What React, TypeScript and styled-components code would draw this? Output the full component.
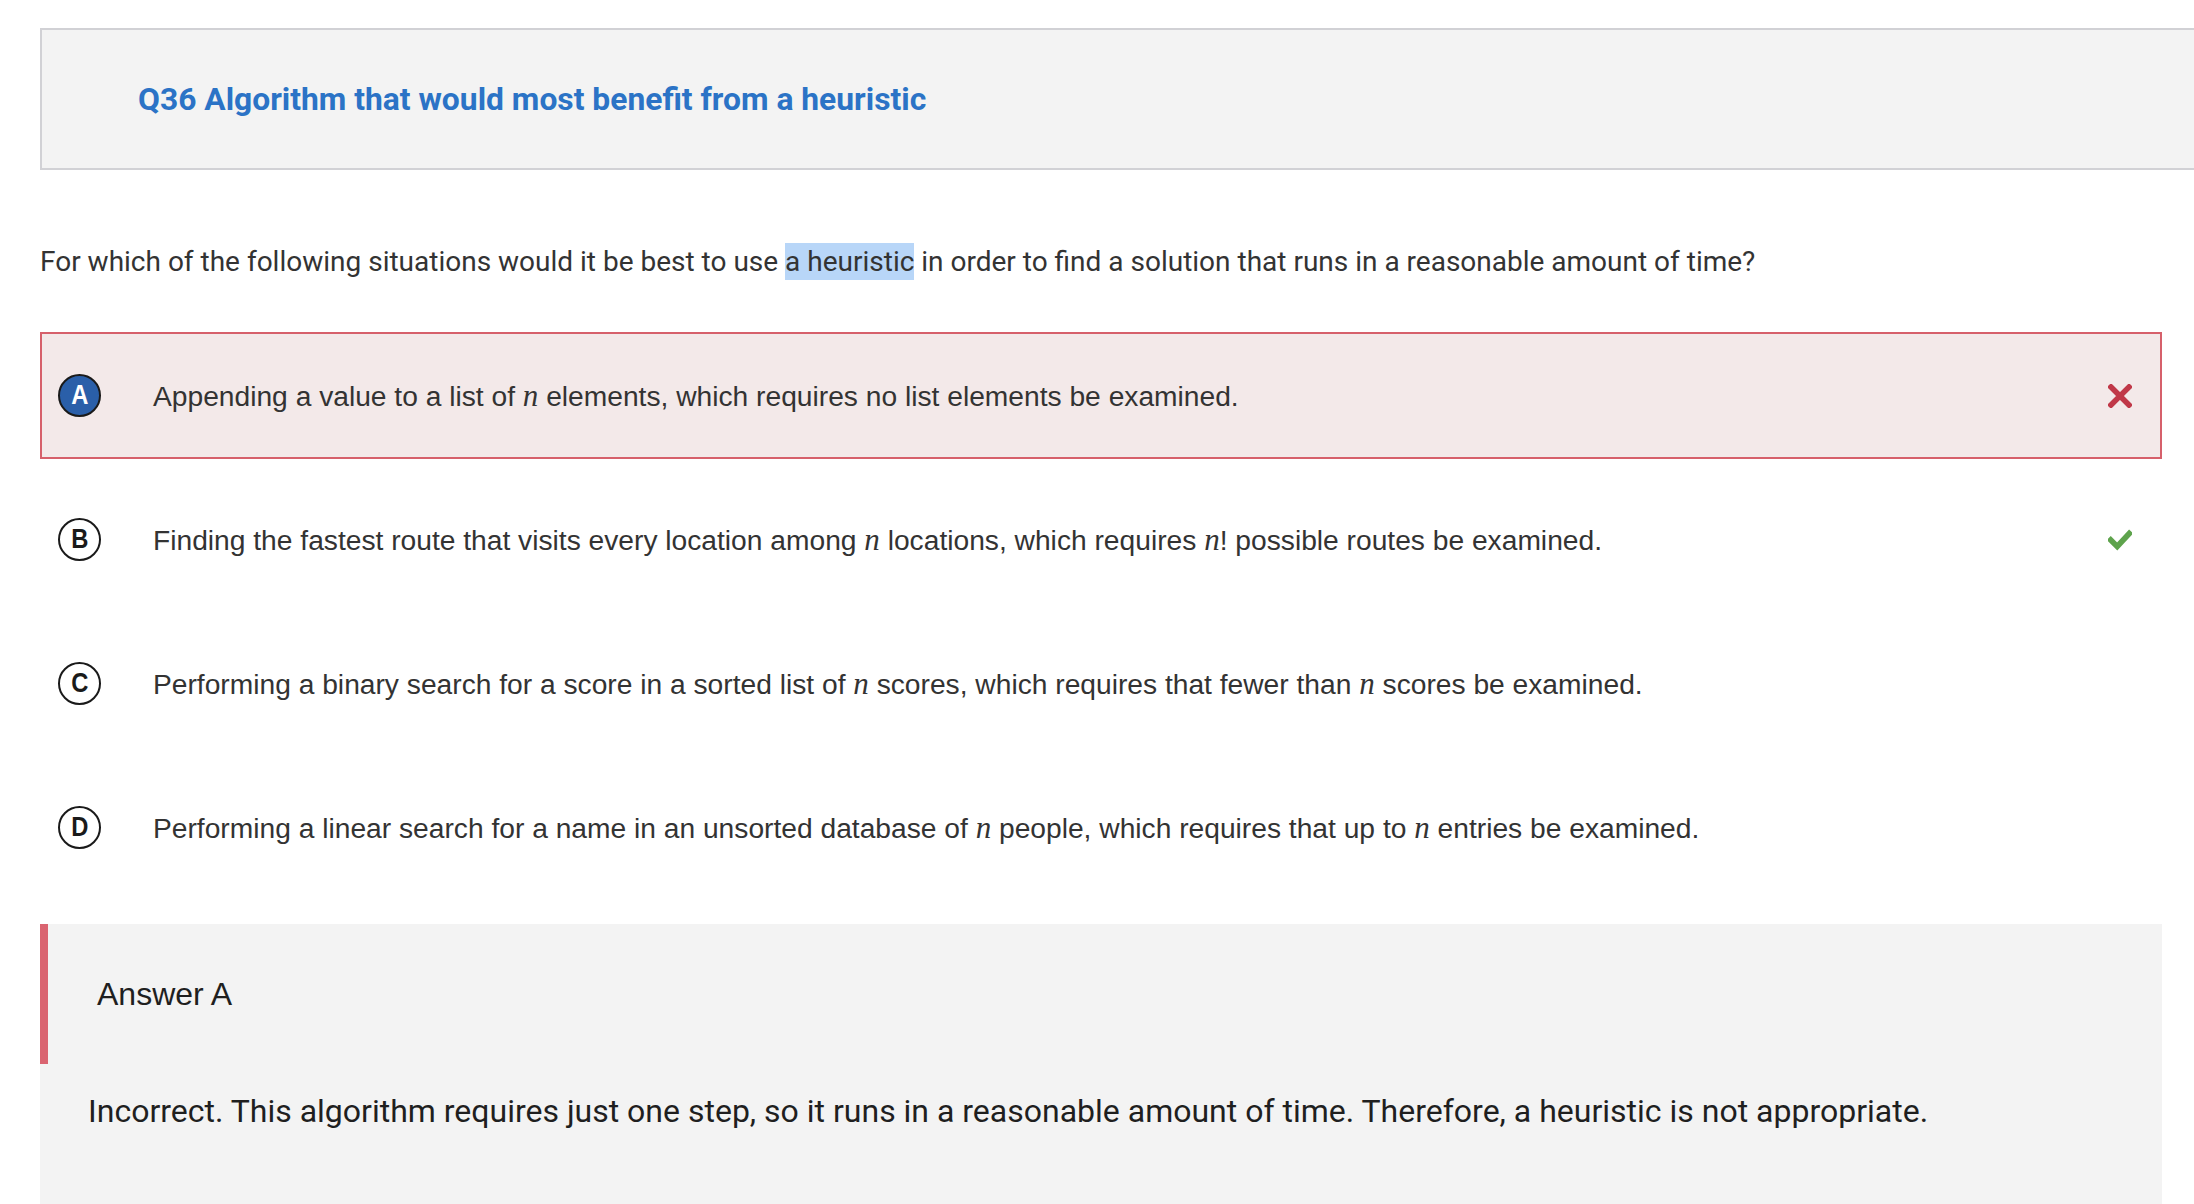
import React from "react";
import styled, { createGlobalStyle } from "styled-components";

const Global = createGlobalStyle`
  html, body { margin: 0; padding: 0; background: #ffffff; }
  body { font-family: Roboto, "Liberation Sans", sans-serif; }
  * { box-sizing: border-box; }
`;

const Page = styled.div`
  padding: 28px 32px 0 40px;
  overflow: hidden;
  height: 1204px;
`;

const Header = styled.div`
  margin-right: -32px;
  height: 142px;
  background: #f3f3f3;
  border: 2px solid #d1d1d5;
  border-right: none;
  padding-left: 96px;
  display: flex;
  align-items: center;
`;

const Title = styled.h1`
  margin: 0;
  font-family: Roboto, sans-serif;
  font-weight: 700;
  font-size: 31.8px;
  color: #2b73c6;
`;

const Question = styled.p`
  margin: 73px 0 0 0;
  font-family: Roboto, sans-serif;
  font-size: 28px;
  line-height: 37px;
  color: #333333;
`;

const Highlight = styled.span`
  display: inline-block;
  background: #b8d6f8;
  line-height: 37px;
`;

const OptionList = styled.div`
  margin-top: 52px;
  display: flex;
  flex-direction: column;
  gap: 17px;
`;

const Option = styled.div<{ $wrong?: boolean }>`
  height: 127px;
  display: flex;
  align-items: center;
  padding: 0 28px 0 16px;
  border: 2px solid ${(p) => (p.$wrong ? "#d6606b" : "transparent")};
  background: ${(p) => (p.$wrong ? "#f3e9e9" : "transparent")};
`;

const Bubble = styled.div<{ $filled?: boolean }>`
  flex: none;
  width: 43px;
  height: 43px;
  border-radius: 50%;
  border: 2px solid #1a1a1a;
  background: ${(p) => (p.$filled ? "#2a5fa9" : "#ffffff")};
  color: ${(p) => (p.$filled ? "#ffffff" : "#1a1a1a")};
  font-family: "Liberation Sans", Arial, sans-serif;
  font-weight: 700;
  font-size: 27px;
  line-height: 1;
  display: flex;
  align-items: center;
  justify-content: center;
`;

const BubbleLetter = styled.span`
  display: inline-block;
  transform: scaleX(0.88);
`;

const OptionText = styled.div`
  flex: 1;
  margin-left: 52px;
  font-family: "Liberation Sans", Arial, sans-serif;
  font-size: 28.2px;
  color: #333333;
`;

const MathVar = styled.span`
  font-family: "Liberation Serif", "Times New Roman", serif;
  font-style: italic;
  font-size: 1.1em;
`;

const Mark = styled.div`
  flex: none;
  width: 24px;
  height: 24px;
  display: flex;
  align-items: center;
  justify-content: center;
`;

const Explanation = styled.div`
  margin-top: 33px;
  background: #f3f3f3;
  padding-bottom: 120px;
`;

const AnswerHead = styled.div`
  height: 140px;
  border-left: 8px solid #da6470;
  padding-left: 49px;
  display: flex;
  align-items: center;
  font-family: "Liberation Sans", Arial, sans-serif;
  font-size: 32px;
  color: #1f1f1f;
`;

const AnswerBody = styled.p`
  margin: 0;
  padding: 27px 0 0 48px;
  font-family: Roboto, sans-serif;
  font-size: 32px;
  line-height: 40px;
  color: #1f1f1f;
`;

const Cross = () => (
  <svg width="24" height="24" viewBox="0 0 24 24">
    <path d="M3 3 L21 21 M21 3 L3 21" stroke="#c03848" strokeWidth="5.5" strokeLinecap="square" fill="none" />
  </svg>
);

const Check = () => (
  <svg width="26" height="22" viewBox="0 0 26 22">
    <path d="M3 11 L10 18 L23 4" stroke="#5ea34c" strokeWidth="6" strokeLinecap="square" fill="none" />
  </svg>
);

const N = () => <MathVar>n</MathVar>;

const Letter = ({ children, filled }: { children: string; filled?: boolean }) => (
  <Bubble $filled={filled}>
    <BubbleLetter>{children}</BubbleLetter>
  </Bubble>
);

export default function App() {
  return (
    <>
      <Global />
      <Page>
        <Header>
          <Title>Q36 Algorithm that would most benefit from a heuristic</Title>
        </Header>
        <Question>
          For which of the following situations would it be best to use <Highlight>a heuristic</Highlight> in order to
          find a solution that runs in a reasonable amount of time?
        </Question>
        <OptionList>
          <Option $wrong>
            <Letter filled>A</Letter>
            <OptionText>
              Appending a value to a list of <N /> elements, which requires no list elements be examined.
            </OptionText>
            <Mark>
              <Cross />
            </Mark>
          </Option>
          <Option>
            <Letter>B</Letter>
            <OptionText>
              Finding the fastest route that visits every location among <N /> locations, which requires <N />! possible
              routes be examined.
            </OptionText>
            <Mark>
              <Check />
            </Mark>
          </Option>
          <Option>
            <Letter>C</Letter>
            <OptionText>
              Performing a binary search for a score in a sorted list of <N /> scores, which requires that fewer than{" "}
              <N /> scores be examined.
            </OptionText>
            <Mark />
          </Option>
          <Option>
            <Letter>D</Letter>
            <OptionText>
              Performing a linear search for a name in an unsorted database of <N /> people, which requires that up to{" "}
              <N /> entries be examined.
            </OptionText>
            <Mark />
          </Option>
        </OptionList>
        <Explanation>
          <AnswerHead>Answer A</AnswerHead>
          <AnswerBody>
            Incorrect. This algorithm requires just one step, so it runs in a reasonable amount of time. Therefore, a
            heuristic is not appropriate.
          </AnswerBody>
        </Explanation>
      </Page>
    </>
  );
}
